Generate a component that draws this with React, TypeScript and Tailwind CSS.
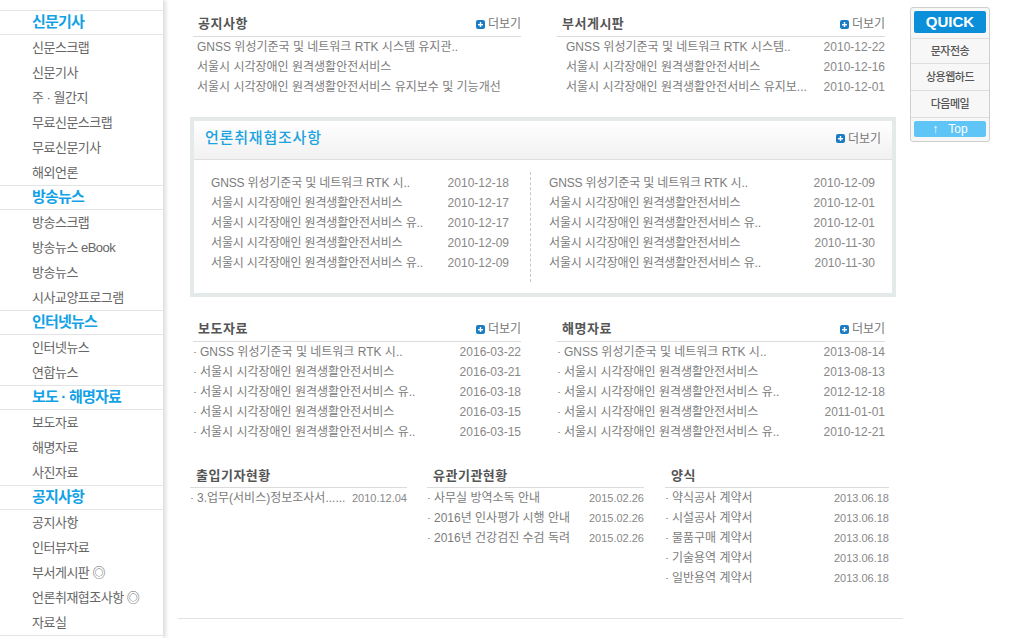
import React from "react";

type Row = { text: string; date?: string };

const sideSections: { title: string; items: string[] }[] = [
  {
    title: "신문기사",
    items: ["신문스크랩", "신문기사", "주 · 월간지", "무료신문스크랩", "무료신문기사", "해외언론"],
  },
  { title: "방송뉴스", items: ["방송스크랩", "방송뉴스 eBook", "방송뉴스", "시사교양프로그램"] },
  { title: "인터넷뉴스", items: ["인터넷뉴스", "연합뉴스"] },
  { title: "보도 · 해명자료", items: ["보도자료", "해명자료", "사진자료"] },
  {
    title: "공지사항",
    items: ["공지사항", "인터뷰자료", "부서게시판 ◎", "언론취재협조사항 ◎", "자료실"],
  },
];

const SEOUL = "서울시 시각장애인 원격생활안전서비스";
const SEOUL_YU = "서울시 시각장애인 원격생활안전서비스 유..";
const GNSS_SHORT = "GNSS 위성기준국 및 네트워크 RTK 시..";

const notice: Row[] = [
  { text: "GNSS 위성기준국 및 네트워크 RTK 시스템 유지관.." },
  { text: SEOUL },
  { text: "서울시 시각장애인 원격생활안전서비스 유지보수 및 기능개선" },
];

const dept: Row[] = [
  { text: "GNSS 위성기준국 및 네트워크 RTK 시스템..", date: "2010-12-22" },
  { text: SEOUL, date: "2010-12-16" },
  { text: "서울시 시각장애인 원격생활안전서비스 유지보...", date: "2010-12-01" },
];

const pressLeft: Row[] = [
  { text: GNSS_SHORT, date: "2010-12-18" },
  { text: SEOUL, date: "2010-12-17" },
  { text: SEOUL_YU, date: "2010-12-17" },
  { text: SEOUL, date: "2010-12-09" },
  { text: SEOUL_YU, date: "2010-12-09" },
];

const pressRight: Row[] = [
  { text: GNSS_SHORT, date: "2010-12-09" },
  { text: SEOUL, date: "2010-12-01" },
  { text: SEOUL_YU, date: "2010-12-01" },
  { text: SEOUL, date: "2010-11-30" },
  { text: SEOUL_YU, date: "2010-11-30" },
];

const report: Row[] = [
  { text: GNSS_SHORT, date: "2016-03-22" },
  { text: SEOUL, date: "2016-03-21" },
  { text: SEOUL_YU, date: "2016-03-18" },
  { text: SEOUL, date: "2016-03-15" },
  { text: SEOUL_YU, date: "2016-03-15" },
];

const explain: Row[] = [
  { text: GNSS_SHORT, date: "2013-08-14" },
  { text: SEOUL, date: "2013-08-13" },
  { text: SEOUL_YU, date: "2012-12-18" },
  { text: SEOUL, date: "2011-01-01" },
  { text: SEOUL_YU, date: "2010-12-21" },
];

const reporters: Row[] = [{ text: "3.업무(서비스)정보조사서......", date: "2010.12.04" }];

const related: Row[] = [
  { text: "사무실 방역소독 안내", date: "2015.02.26" },
  { text: "2016년 인사평가 시행 안내", date: "2015.02.26" },
  { text: "2016년 건강검진 수검 독려", date: "2015.02.26" },
];

const forms: Row[] = [
  { text: "약식공사 계약서", date: "2013.06.18" },
  { text: "시설공사 계약서", date: "2013.06.18" },
  { text: "물품구매 계약서", date: "2013.06.18" },
  { text: "기술용역 계약서", date: "2013.06.18" },
  { text: "일반용역 계약서", date: "2013.06.18" },
];

function PlusIcon() {
  return (
    <svg width="9" height="9" viewBox="0 0 9 9">
      <rect x="0" y="0" width="9" height="9" rx="2" fill="#1b7cc6" />
      <rect x="2" y="4" width="5" height="1.4" fill="#fff" />
      <rect x="3.8" y="2" width="1.4" height="5" fill="#fff" />
    </svg>
  );
}

function More() {
  return (
    <div className="flex items-center gap-[3px] text-[12px] text-[#777]">
      <PlusIcon />
      <span>더보기</span>
    </div>
  );
}

function Bullet() {
  return <span className="inline-block w-[2px] h-[1px] bg-[#b3a99c] mr-[4px] shrink-0" />;
}

function Board(props: {
  title: string;
  rows: Row[];
  width: string;
  bullet?: boolean;
  more?: boolean;
  indent: string;
  small?: boolean;
}) {
  return (
    <div className={props.width}>
      <div
        className={`flex items-center justify-between border-b border-[#dcdcdc] pt-[2px] ${
          props.small ? "h-[26px] pl-[6px]" : "h-[27px] pl-[5px]"
        }`}
      >
        <span className="text-[13px] font-bold text-[#555] tracking-[0.5px]">{props.title}</span>
        {props.more && <More />}
      </div>
      {props.rows.map((r, i) => (
        <div key={i} className={`flex items-center justify-between h-[20px] ${props.indent}`}>
          <div className="flex items-center text-[12px] text-[#7c7c7c] whitespace-nowrap">
            {props.bullet && <Bullet />}
            <span>{r.text}</span>
          </div>
          {r.date && (
            <span className={`text-[#888] whitespace-nowrap ${props.small ? "text-[11px]" : "text-[12px]"}`}>
              {r.date}
            </span>
          )}
        </div>
      ))}
    </div>
  );
}

function PressColumn(props: { rows: Row[]; width: string }) {
  return (
    <div className={props.width}>
      {props.rows.map((r, i) => (
        <div key={i} className="flex items-center justify-between h-[20px]">
          <span className="text-[12px] text-[#7c7c7c] tracking-[-0.15px] whitespace-nowrap">{r.text}</span>
          <span className="text-[12px] text-[#888]">{r.date}</span>
        </div>
      ))}
    </div>
  );
}

function Sidebar() {
  return (
    <div className="w-[163px] shrink-0 h-[638px] bg-white pt-[10px] shadow-[3px_0_4px_rgba(0,0,0,0.13)] relative z-10">
      <div className="border-b border-[#e4e4e4]">
        {sideSections.map((s) => (
          <div key={s.title}>
            <div className="h-[25px] border-y border-[#e4e4e4] flex items-center pl-[32px] text-[15px] font-bold text-[#13a2e6] tracking-[-0.8px]">
              {s.title}
            </div>
            {s.items.map((it) => (
              <div
                key={it}
                className="h-[25px] flex items-center pl-[32px] text-[13px] text-[#666] tracking-[-0.5px]"
              >
                {it}
              </div>
            ))}
          </div>
        ))}
      </div>
    </div>
  );
}

function QuickMenu() {
  return (
    <div className="ml-[7px] mt-[7px] w-[80px] self-start border border-[#cfcfcf] rounded-[3px] bg-[#f7f7f7] px-[3px] pt-[3px] pb-[4px]">
      <div className="h-[22px] rounded-[2px] bg-[#0b8fd9] flex items-center justify-center text-white text-[15px] font-bold font-['Liberation_Sans',sans-serif]">
        QUICK
      </div>
      <div className="-mx-[3px] mt-[5px]">
        <div className="h-[25px] border-t border-[#dedede] flex items-center justify-center text-[11px] font-medium text-[#555] tracking-[-0.5px]">
          문자전송
        </div>
        <div className="h-[27px] border-t border-[#dedede] flex items-center justify-center text-[11px] font-medium text-[#555] tracking-[-0.5px]">
          상용웹하드
        </div>
        <div className="h-[28px] border-y border-[#dedede] flex items-center justify-center text-[11px] font-medium text-[#555] tracking-[-0.5px]">
          다음메일
        </div>
      </div>
      <div className="mt-[3px] h-[16px] rounded-[2px] bg-[#5fc4f6] flex items-center justify-center gap-[10px] text-white text-[12px] font-['Liberation_Sans',sans-serif]">
        <span>↑</span>
        <span>Top</span>
      </div>
    </div>
  );
}

export default function App() {
  return (
    <div className="flex w-[1022px] h-[638px] bg-white overflow-hidden font-['Liberation_Sans','Noto_Sans_CJK_KR',sans-serif]">
      <Sidebar />
      <div className="ml-[15px] w-[725px] shrink-0">
        <div className="flex pl-[15px] pt-[10px]">
          <Board title="공지사항" rows={notice} width="w-[328px]" more indent="pl-[4px]" />
          <div className="ml-[36px]">
            <Board title="부서게시판" rows={dept} width="w-[328px]" more indent="pl-[9px]" />
          </div>
        </div>

        <div className="ml-[12px] mt-[20px] w-[706px] h-[180px] border-4 border-[#e4e9e9] bg-white">
          <div className="h-[39px] border-b border-[#dedede] bg-gradient-to-b from-white to-[#f1f1f1] flex items-center justify-between px-[11px] pb-[3px]">
            <span className="text-[15px] font-medium text-[#1ca3e0] tracking-[0.8px]">언론취재협조사항</span>
            <More />
          </div>
          <div className="flex pt-[12px]">
            <div className="ml-[17px] mt-[1px]">
              <PressColumn rows={pressLeft} width="w-[298px]" />
            </div>
            <div className="ml-[21px] h-[110px] border-l border-dashed border-[#c8c8c8]" />
            <div className="ml-[18px] mt-[1px]">
              <PressColumn rows={pressRight} width="w-[326px]" />
            </div>
          </div>
        </div>

        <div className="flex pl-[15px] mt-[18px]">
          <Board title="보도자료" rows={report} width="w-[328px]" bullet more indent="pl-[1px]" />
          <div className="ml-[36px]">
            <Board title="해명자료" rows={explain} width="w-[328px]" bullet more indent="pl-[1px]" />
          </div>
        </div>

        <div className="flex pl-[12px] mt-[20px] h-[126px]">
          <Board title="출입기자현황" rows={reporters} width="w-[217px]" bullet small indent="pl-[1px]" />
          <div className="ml-[20px]">
            <Board title="유관기관현황" rows={related} width="w-[217px]" bullet small indent="pl-[1px]" />
          </div>
          <div className="ml-[21px]">
            <Board title="양식" rows={forms} width="w-[224px]" bullet small indent="pl-[1px]" />
          </div>
        </div>

        <div className="mt-[30px] border-t border-[#e3e3e3]" />
      </div>
      <QuickMenu />
    </div>
  );
}
